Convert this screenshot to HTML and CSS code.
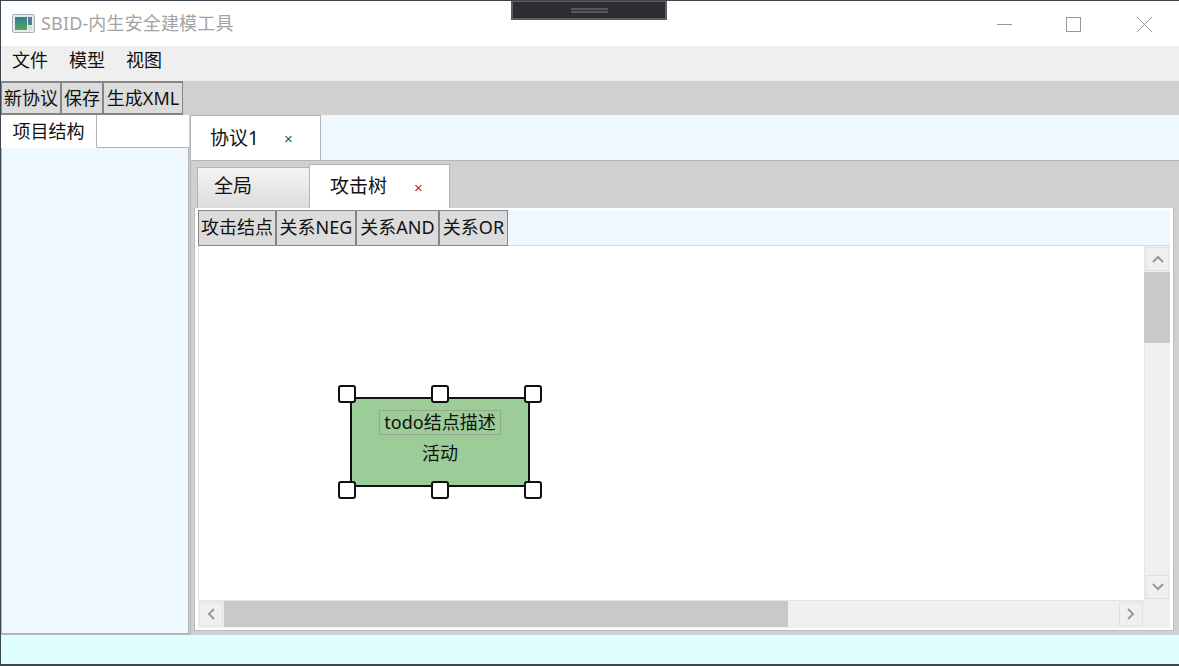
FILE: index.html
```html
<!DOCTYPE html>
<html lang="zh">
<head>
<meta charset="utf-8">
<title>SBID-内生安全建模工具</title>
<link rel="stylesheet" href="styles.css">
</head>
<body>
<div class="window">
  <header class="titlebar">
    <svg class="appicon" width="23" height="19" viewBox="0 0 23 19">
      <defs><linearGradient id="g" x1="0" y1="0" x2="0" y2="1"><stop offset="0" stop-color="#2f7f96"/><stop offset="1" stop-color="#5da35f"/></linearGradient></defs>
      <rect x="0.5" y="0.5" width="22" height="18" rx="1.5" fill="#e6ebee" stroke="#a9b0b4"/>
      <rect x="3" y="3" width="12" height="13" fill="url(#g)"/>
      <rect x="16" y="3" width="4" height="8" fill="#4f7f8f"/>
      <rect x="16" y="12" width="4" height="4" fill="#d4dcdf"/>
    </svg>
    <span class="title">SBID-内生安全建模工具</span>
    <div class="winbtns">
      <svg width="15" height="15" viewBox="0 0 15 15"><path d="M0 7.5H15" stroke="#999" fill="none"/></svg>
      <svg width="15" height="15" viewBox="0 0 15 15"><rect x="0.5" y="0.5" width="14" height="14" stroke="#999" fill="none"/></svg>
      <svg width="15" height="15" viewBox="0 0 15 15"><path d="M0 0L15 15M15 0L0 15" stroke="#999" fill="none"/></svg>
    </div>
  </header>
  <nav class="menubar"><span>文件</span><span>模型</span><span>视图</span></nav>
  <div class="toolbar">
    <button class="tbtn w60">新协议</button><button class="tbtn w42">保存</button><button class="tbtn w80">生成XML</button>
  </div>
  <main class="main">
    <aside class="side">
      <div class="side-tabs"><div class="side-tab">项目结构</div></div>
      <div class="side-panel"></div>
    </aside>
    <section class="work">
      <div class="doc-tabs">
        <div class="doc-tab"><span>协议1</span><span class="x teal">×</span></div>
      </div>
      <div class="doc-panel">
        <div class="sub-tabs">
          <div class="sub-tab">全局</div>
          <div class="sub-tab active"><span>攻击树</span><span class="x red">×</span></div>
        </div>
        <div class="frame">
          <div class="palette">
            <button class="pbtn w78">攻击结点</button><button class="pbtn w80">关系NEG</button><button class="pbtn w83">关系AND</button><button class="pbtn w69">关系OR</button>
          </div>
          <div class="view">
            <div class="canvas">
              <div class="node">
                <div class="node-title">todo结点描述</div>
                <div class="node-sub">活动</div>
                <i class="h tl"></i><i class="h tc"></i><i class="h tr"></i>
                <i class="h bl"></i><i class="h bc"></i><i class="h br"></i>
              </div>
            </div>
            <div class="vbar">
              <div class="arrow"><svg width="14" height="10" viewBox="0 0 14 10"><path d="M2 8L7 3L12 8" stroke="#999" stroke-width="2" fill="none"/></svg></div>
              <div class="vtrack"><div class="vthumb"></div></div>
              <div class="arrow"><svg width="14" height="10" viewBox="0 0 14 10"><path d="M2 2L7 7L12 2" stroke="#999" stroke-width="2" fill="none"/></svg></div>
            </div>
            <div class="hbar">
              <div class="arrow harrow"><svg width="10" height="14" viewBox="0 0 10 14"><path d="M8 2L3 7L8 12" stroke="#999" stroke-width="2" fill="none"/></svg></div>
              <div class="htrack"><div class="hthumb"></div></div>
              <div class="arrow harrow"><svg width="10" height="14" viewBox="0 0 10 14"><path d="M2 2L7 7L2 12" stroke="#999" stroke-width="2" fill="none"/></svg></div>
            </div>
            <div class="corner"></div>
          </div>
        </div>
      </div>
    </section>
  </main>
  <footer class="status"></footer>
</div>
<div class="pin"><span class="pin-grip"></span></div>
</body>
</html>
```
FILE: styles.css
```css
* { box-sizing: border-box; }
html, body { margin: 0; padding: 0; height: 100%; overflow: hidden; }
body {
  position: relative;
  background: #3c4650;
  font-family: "Noto Sans", "Noto Sans CJK SC", sans-serif;
  font-size: 18px;
  color: #111;
}
.window {
  position: absolute;
  left: 1px; top: 1px;
  width: 1178px; height: 663px;
  display: flex; flex-direction: column;
  background: #fff;
}
.titlebar {
  height: 45px; flex: none;
  display: flex; align-items: center;
  padding-left: 11px;
  background: #fff;
}
.appicon { flex: none; margin-bottom: 1px; }
.title { margin-left: 6px; margin-bottom: 1px; color: #a3a3a3; font-size: 18px; line-height: 24px; letter-spacing: .15px; }
.winbtns {
  margin-left: auto; display: flex; align-items: center;
  gap: 54px; padding-right: 27px; margin-top: 1px;
}
.winbtns svg:last-child { margin-left: 2px; }
.menubar {
  height: 35px; flex: none;
  background: #efefef;
  display: flex; align-items: center;
  gap: 21px; padding: 0 11px 7px;
  line-height: 24px;
}
.toolbar {
  height: 34px; flex: none;
  background: #d0d0d0;
  display: flex;
}
button {
  font: inherit; color: inherit; padding: 0 0 2px; margin: 0;
  background: #dcdcdc;
  border: 1px solid #858585;
  line-height: 24px;
  white-space: nowrap;
}
.tbtn { height: 34px; border-width: 2px 1px; padding-bottom: 0; }
.pbtn { height: 36px; border-width: 1px; }
.w60 { width: 60px; } .w42 { width: 42px; } .w80 { width: 80px; }
.w78 { width: 78px; } .w83 { width: 83px; } .w69 { width: 69px; }
.main { flex: 1; min-height: 0; display: flex; gap: 1px; background: #d0d0d0; }
.side { width: 188px; flex: none; display: flex; flex-direction: column; }
.side-tabs { height: 33px; flex: none; border-bottom: 1px solid #b4b4b4; background: #fff; }
.side-tab {
  width: 96px; height: 33px;
  border-right: 1px solid #b4b4b4;
  border-bottom: 1px solid #fff;
  background: #fff;
  text-align: center; line-height: 32px;
}
.side-panel {
  flex: 1;
  background: #eff7ff;
  border: 1px solid #b4b4b4; border-width: 0 1px 2px 1px;
}
.work { flex: 1; min-width: 0; display: flex; flex-direction: column; }
.doc-tabs { height: 45px; flex: none; background: #eff7ff; display: flex; }
.doc-tab {
  width: 131px; height: 45px;
  background: #fff;
  border: 1px solid #b4b4b4; border-bottom: 0;
  display: flex; align-items: center;
  padding: 0 0 2px 19px;
  font-size: 19px;
}
.x { font-size: 15px; font-family: "Liberation Sans", sans-serif; line-height: 20px; }
.doc-tab .x { margin-left: 25px; margin-top: 4px; }
.teal { color: #1d5a66; }
.red { color: #a33; }
.doc-panel {
  flex: 1; min-height: 0;
  background: #d0d0d0;
  border: 1px solid #b4b4b4; border-width: 1px 0 0 1px;
  padding: 3px 5px 4px 3px;
  display: flex; flex-direction: column;
}
.sub-tabs { height: 44px; flex: none; display: flex; padding-left: 3px; font-size: 19px; }
.sub-tab {
  width: 113px; height: 41px; margin-top: 3px;
  background: linear-gradient(#f4f4f4, #dcdcdc);
  border: 1px solid #b4b4b4; border-bottom: 0;
  padding-left: 16px; line-height: 36px;
}
.sub-tab.active {
  width: 141px; height: 44px; margin-top: 0;
  background: #fff;
  padding-left: 20px;
  display: flex; align-items: center;
  padding-bottom: 2px; margin-left: -1px;
}
.sub-tab.active .x { margin-left: 27px; margin-top: 4px; }
.frame {
  flex: 1; min-height: 0;
  background: #fff;
  border: 1px solid #bcbcbc; border-top: 0;
  padding: 2px 3px 2px;
  display: flex; flex-direction: column;
}
.palette {
  height: 36px; flex: none;
  background: #eff7ff;
  border-bottom: 1px solid #d8d8d8;
  display: flex;
}
.view {
  flex: 1; min-height: 0;
  display: grid;
  grid-template-columns: 1fr 26px;
  grid-template-rows: 1fr 28px;
}
.canvas { position: relative; background: #fff; border-left: 1px solid #e6e6e6; }
.node {
  position: absolute; left: 151px; top: 151px;
  width: 180px; height: 90px;
  background: #9ccc98;
  border: 2px solid #111;
  border-radius: 2px;
  text-align: center;
}
.node-title {
  width: 122px; height: 25px; margin: 11px auto 0;
  border: 1px solid #93a88f;
  line-height: 23px; white-space: nowrap;
}
.node-sub { margin-top: 5px; line-height: 26px; }
.h {
  position: absolute; width: 18px; height: 18px;
  background: #fff; border: 2px solid #111; border-radius: 3px;
}
.tl { left: -14px; top: -14px; } .tc { left: 79px; top: -14px; } .tr { left: 172px; top: -14px; }
.bl { left: -14px; top: 82px; } .bc { left: 79px; top: 82px; } .br { left: 172px; top: 82px; }
.vbar, .hbar, .corner { background: #f0f0f0; }
.vbar { display: flex; flex-direction: column; align-items: stretch; border-left: 1px solid #e4e4e4; }
.arrow {
  flex: none; height: 24px; margin: 1px;
  border: 1px solid #e0e0e0;
  display: flex; align-items: center; justify-content: center;
}
.vtrack { flex: 1; min-height: 0; }
.vthumb { height: 71px; background: #c9c9c9; margin-left: -1px; }
.hbar { display: flex; border-top: 1px solid #e4e4e4; }
.harrow { width: 24px; height: 24px; }
.htrack { flex: 1; min-width: 0; }
.hthumb { width: 564px; height: 26px; background: #c9c9c9; }
.status { height: 29px; flex: none; background: #dfffff; }
.pin {
  position: absolute; left: 511px; top: 1px;
  width: 156px; height: 19px;
  background: #2d2d2f;
  border: 2px solid #5e5e5e; border-top-width: 1px; border-bottom-width: 2px;
  display: flex; align-items: center; justify-content: center;
}
.pin-grip { width: 37px; height: 5px; border-top: 2px solid #58585a; border-bottom: 2px solid #58585a; }
```
